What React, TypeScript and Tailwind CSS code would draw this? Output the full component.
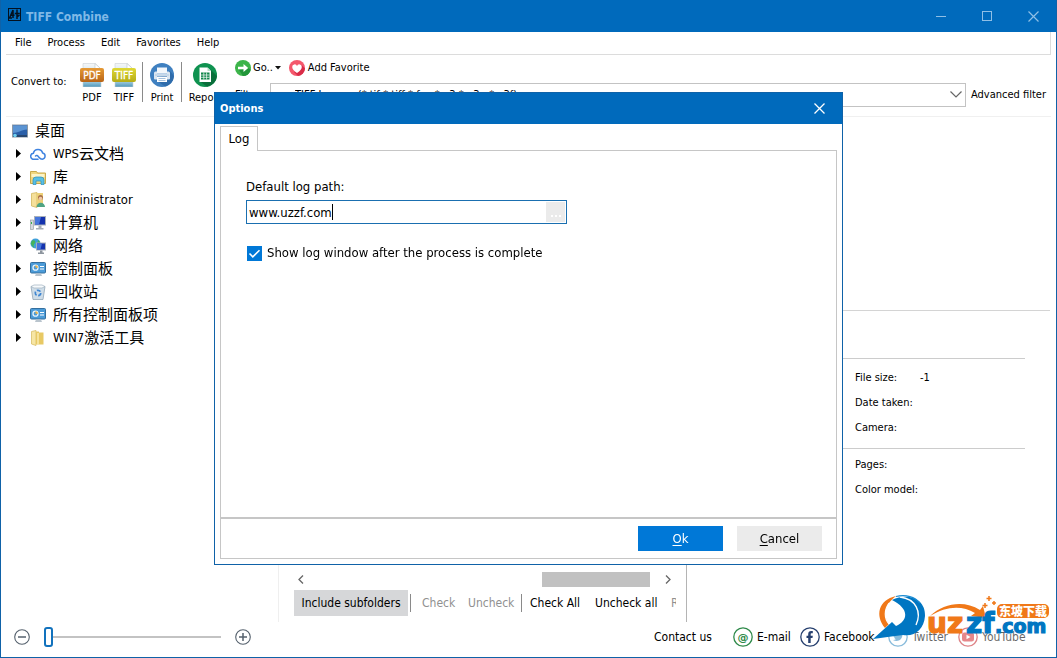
import React, { useState } from "react";

const FONT = "font-['DejaVu_Sans_Condensed','Noto_Sans_CJK_SC',sans-serif]";

/* ---------- window chrome ---------- */

function AppLogo() {
  return (
    <svg className="-mt-1" width="13" height="13" viewBox="0 0 13 13" fill="none" stroke="#04111f" aria-hidden="true">
      <rect x="0.5" y="0.5" width="12" height="12" />
      <path d="M0.500 10h3.500M1.500 10L5 2M5 2v8M2.500 7.300h4M9 1.500v9.500M6.800 5.500h5M9 9l2.500-2" strokeWidth="1.500" />
    </svg>
  );
}

function TitleBar() {
  const control = "flex h-8 w-[46px] items-center justify-center text-[#8fbfe6]";
  return (
    <header className="flex h-8 shrink-0 items-center bg-[#006abc] pl-[7px]">
      <AppLogo />
      <h1 className="ml-[5px] flex-1 pt-0.5 text-xs font-bold text-[#7fb8e6]">TIFF Combine</h1>
      <button type="button" aria-label="Minimize" className={control}>
        <svg width="11" height="11" viewBox="0 0 11 11" stroke="currentColor"><path d="M0 5.500h10" /></svg>
      </button>
      <button type="button" aria-label="Maximize" className={control}>
        <svg width="11" height="11" viewBox="0 0 11 11" stroke="currentColor" fill="none"><rect x="0.500" y="0.500" width="9" height="9" /></svg>
      </button>
      <button type="button" aria-label="Close" className={control}>
        <svg width="11" height="11" viewBox="0 0 11 11" stroke="currentColor"><path d="M0.500 0.500l10 10M10.500 0.500l-10 10" strokeWidth="1.200" /></svg>
      </button>
    </header>
  );
}

function MenuBar() {
  return (
    <nav className="mx-[5px] flex h-[23px] shrink-0 items-center gap-4 border-r border-b border-[#dcdcdc] pl-[9px] text-[11px]">
      {["File", "Process", "Edit", "Favorites", "Help"].map((m) => (
        <button key={m} type="button">{m}</button>
      ))}
    </nav>
  );
}

/* ---------- toolbar ---------- */

function FormatIcon({ label, from, to }: { label: string; from: string; to: string }) {
  const id = `band-${label}`;
  return (
    <svg width="24" height="24" viewBox="0 0 24 24" aria-hidden="true">
      <defs>
        <linearGradient id={id} x1="0" y1="0" x2="0" y2="1">
          <stop offset="0" stopColor={from} />
          <stop offset="1" stopColor={to} />
        </linearGradient>
        <linearGradient id={`${id}-p`} x1="0" y1="0" x2="0" y2="1">
          <stop offset="0" stopColor="#f6f7f8" />
          <stop offset="0.700" stopColor="#b9d9e8" />
          <stop offset="1" stopColor="#4d97bb" />
        </linearGradient>
      </defs>
      <path d="M3 0.500h12l6 5.500v18H3z" fill={`url(#${id}-p)`} stroke="#c9d0d5" strokeWidth="0.600" />
      <path d="M15 0.500v5.500h6z" fill="#fff" stroke="#b9c2c8" strokeWidth="0.600" />
      <rect x="0" y="5" width="24" height="14" rx="2" fill={`url(#${id})`} />
      <text x="12" y="15.500" textAnchor="middle" fontSize="10" fill="#fff" stroke="#fff" strokeWidth="0.300" fontFamily="'DejaVu Sans Condensed',sans-serif">
        {label}
      </text>
    </svg>
  );
}

function PrintIcon() {
  return (
    <svg width="24" height="24" viewBox="0 0 24 24" aria-hidden="true">
      <circle cx="12" cy="12" r="12" fill="#3f80c0" />
      <path d="M20 8l4 5a12 12 0 0 1-9 10.500L6 17z" fill="#2f6cab" />
      <rect x="7" y="4.500" width="10" height="6" fill="#f3f7fb" />
      <path d="M5.500 8.500h1.500v2h10v-2h1.500a1.500 1.500 0 0 1 1.500 1.500v5.500a1 1 0 0 1-1 1h-2v-3h-10v3h-2a1 1 0 0 1-1-1V10a1.500 1.500 0 0 1 1.500-1.500z" fill="#dbe6f1" />
      <rect x="7" y="14" width="10" height="5" fill="#fff" />
      <path d="M8.500 15.500h7M8.500 17.500h7" stroke="#8fb3d6" strokeWidth="0.800" />
      <path d="M5 12h14" stroke="#a6c3df" strokeWidth="0.800" />
    </svg>
  );
}

function ReportIcon() {
  return (
    <svg width="24" height="24" viewBox="0 0 24 24" aria-hidden="true">
      <circle cx="12" cy="12" r="12" fill="#0f9250" />
      <path d="M18 7l6 6a12 12 0 0 1-10 10.800L6.500 18z" fill="#0a6e3b" />
      <path d="M6.500 4.500h8l3.500 3.500v11H6.500z" fill="#fff" />
      <path d="M14.500 4.500v3.500H18z" fill="#b8dcc8" />
      <rect x="8" y="9.500" width="8.500" height="7" fill="#0f8549" />
      <path d="M8 12h8.500M8 14.300h8.500M10.800 9.500v7M13.600 9.500v7" stroke="#fff" strokeWidth="0.700" />
    </svg>
  );
}

function GoIcon() {
  return (
    <svg width="16" height="16" viewBox="0 0 16 16" aria-hidden="true">
      <circle cx="8" cy="8" r="8" fill="#3cb44a" />
      <path d="M13 8l2.800 1.500A8 8 0 0 1 8 16L4 10z" fill="#22963a" />
      <path d="M3 6.700h5.500V4l4.700 4-4.700 4V9.300H3z" fill="#fff" />
    </svg>
  );
}

function HeartIcon() {
  return (
    <svg width="16" height="16" viewBox="0 0 16 16" aria-hidden="true">
      <circle cx="8" cy="8" r="8" fill="#f4586c" />
      <path d="M12.500 5l3.500 3.500A8 8 0 0 1 9 16l-4-4z" fill="#d92c48" />
      <path d="M8 13C5 10.800 3.200 9.200 3.200 6.900a2.500 2.500 0 0 1 4.800-1 2.500 2.500 0 0 1 4.800 1C12.800 9.200 11 10.800 8 13z" fill="#fff" />
    </svg>
  );
}

function Tool({ icon, label }: { icon: React.ReactNode; label: string }) {
  return (
    <button type="button" className="flex w-8 flex-col items-center gap-[3px] text-[11px] leading-4">
      {icon}
      {label}
    </button>
  );
}

function Divider() {
  return <span className="mt-[-1px] h-10 w-px bg-[#8a8a8a]" />;
}

function Toolbar() {
  return (
    <section className="mx-[5px] flex h-[62px] shrink-0 border-b border-[#f0f0f0] pt-2 pl-[5px] text-[11px]">
      <span className="w-[65px] pt-[11px] leading-4">Convert to:</span>
      <div className="flex">
        <Tool icon={<FormatIcon label="PDF" from="#e69a35" to="#b86416" />} label="PDF" />
        <Tool icon={<FormatIcon label="TIFF" from="#dfd835" to="#b5ac16" />} label="TIFF" />
      </div>
      <div className="ml-0.5 flex gap-[3px]">
        <Divider />
        <Tool icon={<PrintIcon />} label="Print" />
        <Divider />
      </div>
      <div className="mx-[7px]">
        <Tool icon={<ReportIcon />} label="Report" />
      </div>
      <div className="ml-[7px] min-w-0 flex-1">
        <div className="-mt-[3px] flex h-4 items-center">
          <button type="button" className="flex items-center gap-0.5">
            <GoIcon />
            Go..
            <svg width="6" height="4" viewBox="0 0 6 4" aria-hidden="true"><path d="M0 0h6L3 3.500z" fill="#111" /></svg>
          </button>
          <button type="button" className="ml-2 flex items-center gap-[3px]">
            <HeartIcon />
            Add Favorite
          </button>
        </div>
        <div className="mt-[7px] flex items-center">
          <label htmlFor="filter" className="w-[35px]">Filter:</label>
          <div className="relative min-w-0 flex-1">
            <select id="filter" className="h-6 w-full appearance-none border border-[#c3c3c3] bg-white pl-6">
              <option>TIFF Images (*.tif;*.tiff;*.fax;*.g3;*.g3n;*.g3f)</option>
            </select>
            <svg className="pointer-events-none absolute top-2 right-1" width="12" height="7" viewBox="0 0 12 7" fill="none" aria-hidden="true">
              <path d="M0.500 0.500L6 6l5.500-5.500" stroke="#666" strokeWidth="1.200" />
            </svg>
          </div>
          <button type="button" className="w-[85px] pl-[5px] text-left">Advanced filter</button>
        </div>
      </div>
    </section>
  );
}

/* ---------- folder tree ---------- */

function DesktopIcon() {
  return (
    <svg width="16" height="14" viewBox="0 0 16 14" aria-hidden="true">
      <rect x="0.500" y="1" width="15" height="12" fill="#2a5fa8" stroke="#8b97a3" />
      <path d="M1 1.500h14v4C9 6 6 9 1 9z" fill="#5b94d3" />
      <rect x="1" y="11" width="14" height="2" fill="#27466f" />
      <circle cx="3" cy="11.500" r="1.800" fill="#6fd0f0" />
    </svg>
  );
}

function CloudIcon() {
  return (
    <svg width="16" height="16" viewBox="0 0 16 16" fill="none" stroke="#3f83e0" strokeWidth="1.500" strokeLinejoin="round" strokeLinecap="round" aria-hidden="true">
      <path d="M8 13.300H4A3 3 0 0 1 3.400 7.300a4.700 4.700 0 0 1 9.200-.3 3.200 3.200 0 0 1-.4 6.300c-2 0-2.700-1.300-3.700-2.500S6.500 9 5.500 10" />
    </svg>
  );
}

function LibraryIcon() {
  return (
    <svg width="16" height="16" viewBox="0 0 16 16" aria-hidden="true">
      <path d="M0.500 2.500h6l1 1.500h8v10.500h-15z" fill="#f0d77f" stroke="#c9a94b" />
      <rect x="1.500" y="5" width="13" height="3" fill="#fdf4c8" />
      <path d="M3 15.500V11a3 3 0 0 1 3-3h5a3 3 0 0 1 3 3v4.500h-3V12H6v3.500z" fill="#58bfe4" stroke="#2b8fbd" strokeWidth="0.700" />
    </svg>
  );
}

function UserFolderIcon() {
  return (
    <svg width="16" height="16" viewBox="0 0 16 16" aria-hidden="true">
      <path d="M1.500 1.500L7 0.500v15l-5.500-1.500z" fill="#f5e09a" stroke="#d3b75e" strokeWidth="0.800" />
      <path d="M7 1h6v13H7z" fill="#ecd078" />
      <circle cx="10.500" cy="5.500" r="2.500" fill="#a9714a" />
      <circle cx="10.500" cy="6.500" r="1.800" fill="#f0c9a4" />
      <path d="M6.500 15a4 4 0 0 1 8.500 0z" fill="#4fa483" />
    </svg>
  );
}

function ComputerIcon() {
  return (
    <svg width="16" height="16" viewBox="0 0 16 16" aria-hidden="true">
      <rect x="0.500" y="5" width="3" height="9.500" fill="#d5d9dd" stroke="#8c949c" strokeWidth="0.600" />
      <rect x="1" y="7" width="1" height="2" fill="#35b04a" />
      <rect x="4.500" y="1.500" width="11" height="8.500" fill="#1533ae" stroke="#a8b0ba" />
      <path d="M5 2h6l-2 7.500H5z" fill="#4676dc" />
      <path d="M8.500 10.500h3v2.500h2v1.500H6V13h2.500z" fill="#a7aeb6" />
    </svg>
  );
}

function NetworkIcon() {
  return (
    <svg width="16" height="16" viewBox="0 0 16 16" aria-hidden="true">
      <circle cx="5.500" cy="5.500" r="5" fill="#3f9fda" />
      <path d="M2 2.500c3-1 4 1 3 2.500S3 7 4 9 1.500 8 0.800 5.500zM8 2c1.500 1 2 2 2 3.500L7.500 5z" fill="#45b45a" />
      <rect x="6.500" y="5" width="9" height="7" fill="#1533ae" stroke="#a8b0ba" />
      <path d="M7 5.500h5l-1.500 6H7z" fill="#4676dc" />
      <path d="M10 12.500h2.500v2H14V16H8v-1.500h2z" fill="#8d959e" />
    </svg>
  );
}

function ControlPanelIcon() {
  return (
    <svg width="16" height="16" viewBox="0 0 16 16" aria-hidden="true">
      <rect x="0.500" y="1.500" width="15" height="10.500" rx="1" fill="#4b9bd8" stroke="#356f9e" />
      <circle cx="5.500" cy="6.700" r="2.500" fill="none" stroke="#e9f4fc" strokeWidth="1.300" />
      <path d="M5.500 6.700V4.200A2.500 2.500 0 0 1 8 6.700z" fill="#f0b544" />
      <path d="M10 5.500h4M10 8h4" stroke="#fff" strokeWidth="1.200" />
      <path d="M6 12.500h5l1 2.500H5z" fill="#b9c4cd" />
    </svg>
  );
}

function RecycleIcon() {
  return (
    <svg width="16" height="16" viewBox="0 0 16 16" aria-hidden="true">
      <path d="M1 2.500h14L13 15.500H3z" fill="#cfdde8" stroke="#93a6b6" strokeWidth="0.800" />
      <path d="M1 2.500L4 1h8l3 1.500-3 1.500H4z" fill="#f7fafc" stroke="#9fb0be" strokeWidth="0.700" />
      <circle cx="8" cy="9" r="2.700" fill="none" stroke="#3f86d2" strokeWidth="1.700" strokeDasharray="4 1.600" />
    </svg>
  );
}

function FolderIcon() {
  return (
    <svg width="16" height="16" viewBox="0 0 16 16" aria-hidden="true">
      <path d="M1.500 1.500L6 0.500v15l-4.500-1.500z" fill="#f7e6a4" stroke="#d9bf68" strokeWidth="0.800" />
      <path d="M6 1.500h3v13H6zM9 2.500h4.500v12H9z" fill="#e8c964" />
      <path d="M8 3v11" stroke="#fff3bf" strokeWidth="1.200" />
    </svg>
  );
}

const TREE: { icon: React.ReactNode; latin?: string; cjk?: string }[] = [
  { icon: <CloudIcon />, latin: "WPS", cjk: "云文档" },
  { icon: <LibraryIcon />, cjk: "库" },
  { icon: <UserFolderIcon />, latin: "Administrator" },
  { icon: <ComputerIcon />, cjk: "计算机" },
  { icon: <NetworkIcon />, cjk: "网络" },
  { icon: <ControlPanelIcon />, cjk: "控制面板" },
  { icon: <RecycleIcon />, cjk: "回收站" },
  { icon: <ControlPanelIcon />, cjk: "所有控制面板项" },
  { icon: <FolderIcon />, latin: "WIN7", cjk: "激活工具" },
];

function FolderTree() {
  return (
    <aside className="w-[278px] shrink-0 border-r border-[#efefef] pt-0.5 text-[13px]">
      <div className="flex h-[23px] items-center gap-[7px] pl-[11px] text-[15px]">
        <DesktopIcon />
        <span className="leading-5">桌面</span>
      </div>
      <ul>
        {TREE.map((n, i) => (
          <li key={i} className="flex h-[23px] items-center pl-[15px]">
            <svg width="5" height="9" viewBox="0 0 5 9" aria-hidden="true"><path d="M0 0l5 4.500L0 9z" fill="#000" /></svg>
            <span className="mr-[7px] ml-[9px]">{n.icon}</span>
            {n.latin}
            {n.cjk && <span className="text-[15px] leading-5">{n.cjk}</span>}
          </li>
        ))}
      </ul>
    </aside>
  );
}

/* ---------- centre and details ---------- */

function FileList() {
  const sep = "mx-0.5 h-[18px] w-px shrink-0 bg-[#8a8a8a]";
  return (
    <section className="flex w-[408px] shrink-0 flex-col justify-end border-r border-[#b4b4b4] pr-2.5 pb-1.5 pl-[15px]">
      <div className="flex h-[15px] items-center pl-1">
        <svg width="6" height="9" viewBox="0 0 6 9" fill="none" stroke="#666" strokeWidth="1.300" aria-hidden="true"><path d="M5 0.500l-4 4 4 4" /></svg>
        <div className="mr-[15px] flex h-[15px] flex-1 justify-end">
          <div className="w-[108px] bg-[#c1c1c1]" />
        </div>
        <svg className="mr-[5px]" width="6" height="9" viewBox="0 0 6 9" fill="none" stroke="#666" strokeWidth="1.300" aria-hidden="true"><path d="M1 0.500l4 4-4 4" /></svg>
      </div>
      <div className="mt-[3px] flex h-[26px] items-center overflow-hidden text-xs whitespace-nowrap">
        <button type="button" className="h-[26px] w-[114px] shrink-0 bg-[#d6d7d9]">Include subfolders</button>
        <span className={sep} />
        <button type="button" disabled className="ml-[9px] w-[46px] shrink-0 text-left text-[#909090]">Check</button>
        <button type="button" disabled className="w-[51px] shrink-0 text-left text-[#909090]">Uncheck</button>
        <span className={sep} />
        <button type="button" className="ml-1.5 w-[65px] shrink-0 text-left">Check All</button>
        <button type="button" className="w-[76px] shrink-0 text-left">Uncheck all</button>
        <button type="button" disabled className="text-[#909090]">Restore</button>
      </div>
    </section>
  );
}

function Details() {
  const row = "flex h-[25px] items-center";
  const name = "w-[65px]";
  return (
    <section className="mr-[6px] min-w-0 flex-1 text-[11px]">
      <div className="h-[194px] border-b border-[#d4d4d4]" />
      <div className="mr-[25px] h-12 border-b border-[#cccccc]" />
      <dl className="mr-[25px] border-b border-[#cccccc] pt-[7px] pb-[7px] pl-[168px]">
        <div className={row}><dt className={name}>File size:</dt><dd>-1</dd></div>
        <div className={row}><dt className={name}>Date taken:</dt></div>
        <div className={row}><dt className={name}>Camera:</dt></div>
      </dl>
      <dl className="pt-1 pl-[168px]">
        <div className={row}><dt>Pages:</dt></div>
        <div className={row}><dt>Color model:</dt></div>
      </dl>
    </section>
  );
}

/* ---------- footer ---------- */

function ZoomButton({ plus }: { plus?: boolean }) {
  return (
    <button type="button" aria-label={plus ? "Zoom in" : "Zoom out"}>
      <svg className="block" width="16" height="16" viewBox="0 0 16 16" fill="none" stroke="#55616d" aria-hidden="true">
        <circle cx="8" cy="8" r="7.300" strokeWidth="1.100" />
        <path d={plus ? "M4 8h8M8 4v8" : "M4 8h8"} strokeWidth="1.500" />
      </svg>
    </button>
  );
}

function SocialLink({ color, label, width, faded, children }: { color: string; label: string; width: string; faded?: boolean; children: React.ReactNode }) {
  return (
    <a href="#" className={`flex items-center gap-1 ${width} ${faded ? "opacity-60" : ""}`}>
      <svg className="shrink-0" width="20" height="20" viewBox="0 0 20 20" aria-hidden="true">
        <circle cx="10" cy="10" r="9.200" fill="#fff" stroke={color} strokeWidth="1.300" />
        {children}
      </svg>
      {label}
    </a>
  );
}

function Footer() {
  return (
    <footer className="flex h-[35px] shrink-0 items-center pb-1.5 pl-[13px] text-xs">
      <ZoomButton />
      <input
        type="range"
        aria-label="Thumbnail size"
        min={0}
        max={100}
        defaultValue={0}
        className="mx-[14px] h-5 w-[177px] appearance-none bg-transparent [&::-webkit-slider-runnable-track]:h-0.5 [&::-webkit-slider-runnable-track]:bg-[#c3c3c3] [&::-webkit-slider-thumb]:-mt-[9px] [&::-webkit-slider-thumb]:h-5 [&::-webkit-slider-thumb]:w-[9px] [&::-webkit-slider-thumb]:appearance-none [&::-webkit-slider-thumb]:rounded-[3px] [&::-webkit-slider-thumb]:border-2 [&::-webkit-slider-thumb]:border-[#1272bd] [&::-webkit-slider-thumb]:bg-white"
      />
      <ZoomButton plus />
      <div className="ml-auto flex items-center pr-6">
        <span className="w-[79px]">Contact us</span>
        <SocialLink color="#2f8a4a" label="E-mail" width="w-[67px]">
          <text x="10" y="13.500" textAnchor="middle" fontSize="11" fontWeight="700" fill="#2f8a4a" fontFamily="'DejaVu Sans',sans-serif">@</text>
        </SocialLink>
        <SocialLink color="#27406f" label="Facebook" width="w-[88px]">
          <path d="M8.200 16v-5H6.500V8.700h1.700V7.200C8.200 5.200 9.300 4 11.200 4h1.600v2.300h-1.200c-.7 0-.9.300-.9 1v1.400h2.100l-.3 2.300h-1.800v5z" fill="#27406f" />
        </SocialLink>
        <SocialLink color="#3a8fc4" label="Twitter" width="w-[70px]" faded>
          <path d="M15.500 6.500c-.4.200-.8.300-1.200.3.400-.3.800-.7.900-1.200-.4.300-.9.400-1.300.5a2.200 2.200 0 0 0-3.700 2C8.300 8 6.700 7.100 5.600 5.700c-.6 1-.3 2.200.6 2.900-.3 0-.6-.1-.9-.3 0 1 .7 2 1.700 2.200-.3.100-.6.100-.9 0 .3.900 1.100 1.500 2 1.500-.9.700-2 1-3.200.9 4.400 2.800 9.600.2 9.500-5.300.4-.3.800-.7 1.100-1.100z" fill="#3a8fc4" />
        </SocialLink>
        <SocialLink color="#c93238" label="YouTube" width="w-[74px]" faded>
          <rect x="4" y="5.500" width="12" height="9" rx="2.500" fill="#d6383e" />
          <path d="M8.500 7.700v4.600l4-2.300z" fill="#fff" />
        </SocialLink>
      </div>
    </footer>
  );
}

function Watermark() {
  return (
    <svg className="pointer-events-none absolute right-1 bottom-2.5" width="180" height="56" viewBox="0 0 180 56" aria-hidden="true">
      <path d="M20 9C30 14 38 22 22 35l-6-2C9 24 11 15 20 9z" fill="#fff" />
      <path d="M24 5C6 9 3 25 13 37l4-4C10 24 13 13 24 5z" fill="#f07818" />
      <path d="M17 12C12 19 12 27 17 33" fill="none" stroke="#fff" strokeWidth="1.200" />
      <path d="M20 9C36 1 54 8 53 25 52 38 43 46 31 44 20 45 11 47 1 48L20 31l4 4C36 30 38 18 20 9z" fill="#0076c2" />
      <path d="M28 6C44 8 50 21 44 34" fill="none" stroke="#fff" strokeWidth="1.400" />
      <path d="M24 5.500C34 3 43 6 48 12" fill="none" stroke="#1a8bd2" strokeWidth="1.200" />
      <path d="M58 25C72 12 92 9 108 19l3-4 3 12-15-2 4-3C90 14 74 15 58 25z" fill="#f07818" />
      <g fontFamily="'DejaVu Sans',sans-serif" fontWeight="700" fontSize="28" strokeWidth="1.200">
        <text x="55" y="42" fill="#f07818" stroke="#f07818">uz</text>
        <text x="94" y="42" fill="#0076c2" stroke="#0076c2">zf</text>
        <text x="123" y="42" fill="#0076c2" stroke="#0076c2" fontSize="19">.com</text>
      </g>
      <path d="M113 12v5M110.500 14.500h5M117 5v5M114.500 7.500h5M122 10v4M120 12h4" stroke="#f07818" strokeWidth="1.500" />
      <rect x="125" y="13" width="52" height="14" rx="5" fill="#f07818" />
      <text x="151" y="24.500" textAnchor="middle" fontSize="12" fontWeight="900" fill="#fff" fontFamily="'Noto Sans CJK SC',sans-serif">东坡下载</text>
    </svg>
  );
}

/* ---------- options dialog ---------- */

function OptionsDialog() {
  const [path, setPath] = useState("www.uzzf.com");
  const [showLog, setShowLog] = useState(true);
  return (
    <div className="absolute inset-0 flex items-center justify-center">
      <div role="dialog" aria-labelledby="options-title" className="flex h-[473px] w-[629px] flex-col border border-[#0f62a8] bg-white text-[13px]">
        <div className="flex h-[31px] shrink-0 items-center justify-between bg-[#006abc] pl-[5px] text-white">
          <h2 id="options-title" className="pt-0.5 text-[11px] font-bold">Options</h2>
          <button type="button" aria-label="Close" className="flex h-[31px] w-[46px] items-center justify-center">
            <svg width="11" height="11" viewBox="0 0 11 11" stroke="currentColor" aria-hidden="true"><path d="M0.500 0.500l10 10M10.500 0.500l-10 10" strokeWidth="1.300" /></svg>
          </button>
        </div>
        <div className="flex flex-1 flex-col px-[5px] pt-0.5 pb-[5px]">
          <div role="tablist" className="flex">
            <button type="button" role="tab" aria-selected="true" className="relative z-10 -mb-px h-[25px] w-[38px] border border-b-0 border-[#c6c6c6] bg-white">Log</button>
          </div>
          <div role="tabpanel" className="flex flex-1 flex-col border border-[#c6c6c6]">
            <div className="flex-1 px-[25px] pt-[26px]">
              <label htmlFor="log-path" className="block leading-5">Default log path:</label>
              <div className="mt-[3px] flex h-6 w-[321px] items-center border border-[#1a6fb0] pr-px">
                <div className="flex h-full min-w-0 flex-1 items-center">
                  <input id="log-path" value={path} onChange={(e) => setPath(e.target.value)} autoFocus className="h-full field-sizing-content pl-0.5 outline-none caret-transparent" />
                  <span className="h-4 w-px bg-black" />
                </div>
                <button type="button" aria-label="Browse" className="flex h-5 w-[19px] items-end justify-center gap-0.5 bg-[#ebebeb] pb-[5px]">
                  <span className="size-0.5 bg-white" />
                  <span className="size-0.5 bg-white" />
                  <span className="size-0.5 bg-white" />
                </button>
              </div>
              <label className="mt-[19px] flex items-center gap-[5px] pl-px leading-5">
                <span className="relative flex">
                  <input type="checkbox" checked={showLog} onChange={(e) => setShowLog(e.target.checked)} className="peer size-[15px] appearance-none border border-[#0078d7] checked:bg-[#0078d7]" />
                  <svg className="pointer-events-none absolute inset-0 hidden peer-checked:block" width="15" height="15" viewBox="0 0 15 15" fill="none" aria-hidden="true"><path d="M2.500 7.500l3.300 3.300 6.700-6.600" stroke="#fff" strokeWidth="1.600" /></svg>
                </span>
                Show log window after the process is complete
              </label>
            </div>
            <div className="flex h-[41px] shrink-0 justify-end gap-[14px] border-t-2 border-[#c6c6c6] pt-[7px] pr-[14px]">
              <button type="button" className="h-[25px] w-[85px] bg-[#0078d7] text-white"><u className="underline-offset-2">O</u>k</button>
              <button type="button" className="h-[25px] w-[85px] bg-[#ebebeb]"><u className="underline-offset-2">C</u>ancel</button>
            </div>
          </div>
        </div>
      </div>
    </div>
  );
}

export default function App() {
  return (
    <div className={`relative flex h-screen flex-col border border-t-0 border-[#0f62a8] bg-white text-black ${FONT}`}>
      <TitleBar />
      <MenuBar />
      <Toolbar />
      <main className="flex min-h-0 flex-1">
        <FolderTree />
        <FileList />
        <Details />
      </main>
      <Footer />
      <Watermark />
      <OptionsDialog />
    </div>
  );
}
